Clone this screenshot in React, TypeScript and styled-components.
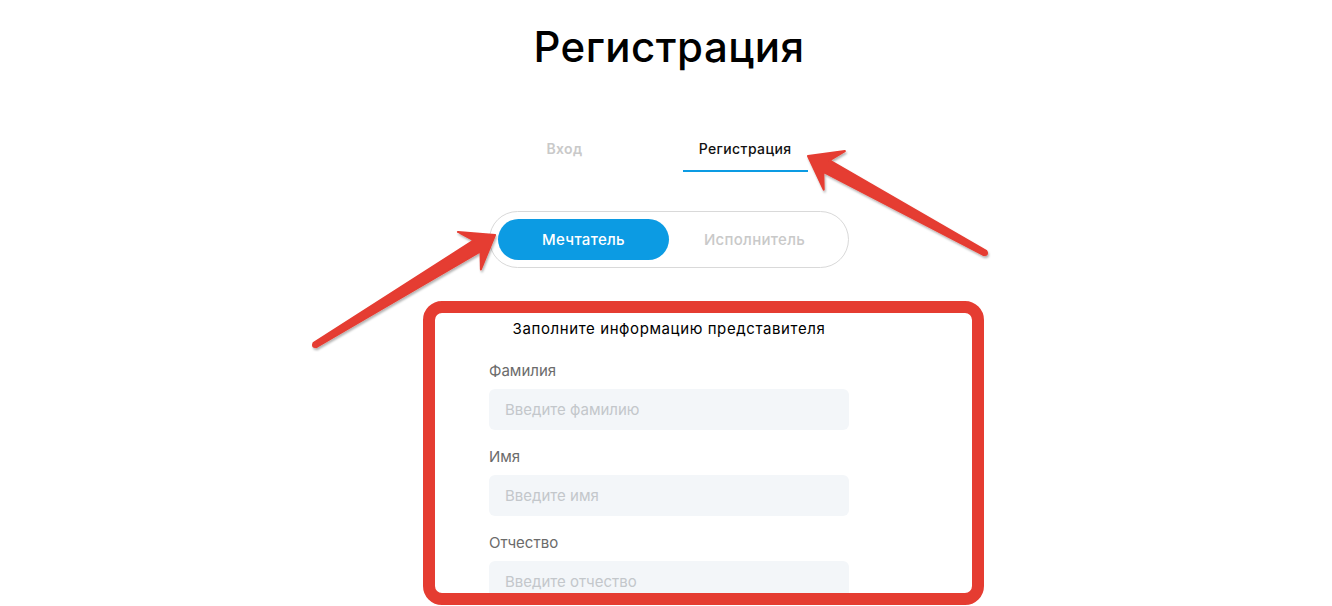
import React from "react";
import styled, { createGlobalStyle } from "styled-components";

const Global = createGlobalStyle`
  html, body { margin: 0; padding: 0; background: #ffffff; }
  body { font-family: Inter, "Noto Sans", "DejaVu Sans", sans-serif; color: #111; overflow: hidden; }
  * { box-sizing: border-box; }
`;

const Page = styled.div`
  position: relative;
  width: 1332px;
  height: 606px;
  padding-left: 6px;
  overflow: hidden;
  display: flex;
  flex-direction: column;
  align-items: center;
  & > * { flex-shrink: 0; }
`;

const Title = styled.h1`
  margin: 22px 0 0;
  font-size: 42px;
  line-height: 50px;
  font-weight: 500;
  color: #000;
  letter-spacing: 0.5px;
`;

const Tabs = styled.div`
  margin-top: 68px;
  display: flex;
  gap: 84px;
`;

const Tab = styled.button<{ $active?: boolean }>`
  border: none;
  background: none;
  font-family: inherit;
  padding: 0 16px 13px;
  font-size: 14px;
  line-height: 17px;
  letter-spacing: 0.4px;
  font-weight: ${(p) => (p.$active ? 500 : 600)};
  color: ${(p) => (p.$active ? "#111" : "#c9c9c9")};
  border-bottom: 2px solid ${(p) => (p.$active ? "#0c9be3" : "transparent")};
`;

const Toggle = styled.div`
  margin-top: 39px;
  width: 360px;
  height: 57px;
  border: 1px solid #d9d9d9;
  border-radius: 29px;
  padding: 7px 8px;
  display: flex;
`;

const ToggleButton = styled.button<{ $active?: boolean }>`
  flex: 1;
  border: none;
  border-radius: 21px;
  font-family: inherit;
  font-size: 15px;
  letter-spacing: 0.3px;
  font-weight: 500;
  background: ${(p) => (p.$active ? "#0c9be3" : "transparent")};
  color: ${(p) => (p.$active ? "#fff" : "#c9c9c9")};
`;

const Form = styled.div`
  margin-top: 52px;
  width: 360px;
  display: flex;
  flex-direction: column;
`;

const Heading = styled.div`
  text-align: center;
  font-size: 15px;
  line-height: 18px;
  font-weight: 400;
  letter-spacing: 0.6px;
  color: #000;
  margin-bottom: 24px;
  white-space: nowrap;
`;

const Field = styled.div`
  display: flex;
  flex-direction: column;
  gap: 9px;
  margin-bottom: 18px;
`;

const Label = styled.label`
  font-size: 15px;
  line-height: 18px;
  color: #6b6b6b;
`;

const Input = styled.input`
  height: 41px;
  border: none;
  border-radius: 6px;
  background: #f3f6f9;
  padding: 0 16px;
  font-family: inherit;
  font-size: 15px;
  color: #333;
  outline: none;
  &::placeholder { color: #c3c7cb; }
`;

const Frame = styled.div`
  position: absolute;
  left: 423px;
  top: 301px;
  width: 561px;
  height: 304px;
  border: 12px solid #e53c31;
  border-radius: 19px;
  pointer-events: none;
`;

const Overlay = styled.svg`
  position: absolute;
  left: 0;
  top: 0;
  pointer-events: none;
`;

type Pt = [number, number];

function arrowPoints(tail: Pt, tip: Pt, headLen: number, headHalf: number, wTail: number, wHead: number): string {
  const dx = tip[0] - tail[0];
  const dy = tip[1] - tail[1];
  const len = Math.hypot(dx, dy);
  const ux = dx / len;
  const uy = dy / len;
  const nx = -uy;
  const ny = ux;
  const base: Pt = [tip[0] - ux * headLen, tip[1] - uy * headLen];
  const notch: Pt = [base[0] + ux * 5, base[1] + uy * 5];
  const at = (p: Pt, s: number): string => `${(p[0] + nx * s).toFixed(1)},${(p[1] + ny * s).toFixed(1)}`;
  return [
    at(tail, wTail / 2),
    at(notch, wHead / 2),
    at([base[0] - ux * 4, base[1] - uy * 4], headHalf),
    `${tip[0]},${tip[1]}`,
    at([base[0] - ux * 4, base[1] - uy * 4], -headHalf),
    at(notch, -wHead / 2),
    at(tail, -wTail / 2),
  ].join(" ");
}

const Arrow: React.FC<{ tail: Pt; tip: Pt }> = ({ tail, tip }) => (
  <g filter="url(#shadow)">
    <polygon
      points={arrowPoints(tail, tip, 26, 22, 5, 13)}
      fill="#e53c31"
      stroke="#e53c31"
      strokeWidth={2}
      strokeLinejoin="round"
    />
    <circle cx={tail[0]} cy={tail[1]} r={3} fill="#e53c31" />
  </g>
);

export default function App() {
  return (
    <>
      <Global />
      <Page>
        <Title>Регистрация</Title>
        <Tabs>
          <Tab>Вход</Tab>
          <Tab $active>Регистрация</Tab>
        </Tabs>
        <Toggle>
          <ToggleButton $active>Мечтатель</ToggleButton>
          <ToggleButton>Исполнитель</ToggleButton>
        </Toggle>
        <Form>
          <Heading>Заполните информацию представителя</Heading>
          <Field>
            <Label>Фамилия</Label>
            <Input placeholder="Введите фамилию" />
          </Field>
          <Field>
            <Label>Имя</Label>
            <Input placeholder="Введите имя" />
          </Field>
          <Field>
            <Label>Отчество</Label>
            <Input placeholder="Введите отчество" />
          </Field>
        </Form>
        <Frame />
        <Overlay width={1332} height={606} viewBox="0 0 1332 606">
          <defs>
            <filter id="shadow" x="-20%" y="-20%" width="140%" height="140%">
              <feDropShadow dx="1" dy="2" stdDeviation="1" floodColor="#000" floodOpacity="0.3" />
            </filter>
          </defs>
          <Arrow tail={[315, 345]} tip={[495, 235]} />
          <Arrow tail={[985, 253]} tip={[808, 156]} />
        </Overlay>
      </Page>
    </>
  );
}
